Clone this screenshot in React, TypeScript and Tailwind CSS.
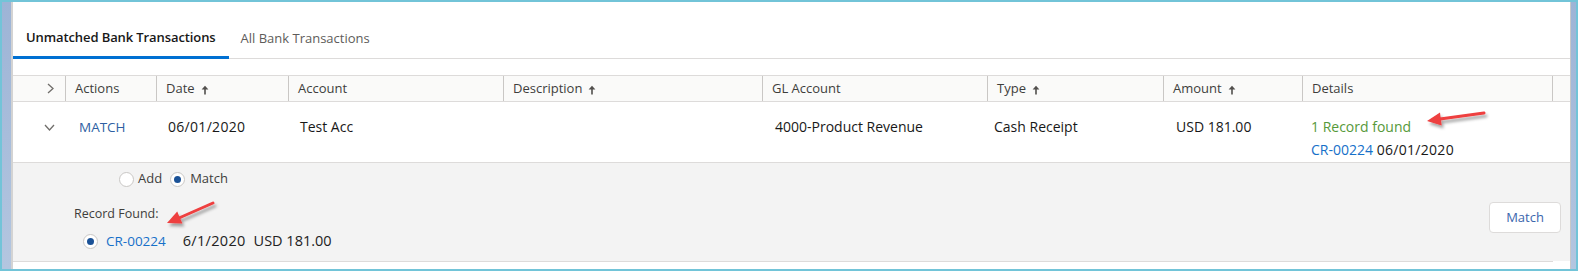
import * as React from "react";

const columns = [
	{ label: "", width: 52, sort: false },
	{ label: "Actions", width: 91, sort: false },
	{ label: "Date", width: 132, sort: true },
	{ label: "Account", width: 215, sort: false },
	{ label: "Description", width: 259, sort: true },
	{ label: "GL Account", width: 225, sort: false },
	{ label: "Type", width: 176, sort: true },
	{ label: "Amount", width: 139, sort: true },
	{ label: "Details", width: 250, sort: false },
];

function SortArrow() {
	return (
		<svg width="8" height="10" viewBox="0 0 8 10" className="ml-[6px] mt-[2px]">
			<path d="M4 9.5V2.5" stroke="#514f4d" strokeWidth="1.6" />
			<path d="M0.6 4.6L4 0.8L7.4 4.6Z" fill="#514f4d" />
		</svg>
	);
}

function Radio({ checked }: { checked?: boolean }) {
	return (
		<span className="flex h-[15px] w-[15px] items-center justify-center rounded-full border border-[#c9c7c5] bg-white">
			{checked && <span className="h-[7px] w-[7px] rounded-full bg-[#1b5297]" />}
		</span>
	);
}

function Annotations() {
	return (
		<svg
			className="pointer-events-none absolute inset-0"
			width="1578"
			height="271"
			viewBox="0 0 1578 271"
		>
			<defs>
				<filter id="shadow" x="-20%" y="-50%" width="140%" height="200%">
					<feDropShadow dx="2" dy="3" stdDeviation="1.6" floodColor="#000" floodOpacity="0.35" />
				</filter>
			</defs>
			<g filter="url(#shadow)">
				<path d="M1484 113L1440 119" stroke="#ee3f3f" strokeWidth="3" strokeLinecap="round" />
				<path d="M1427 121L1441.7 125.5L1440 112.6Z" fill="#ee3f3f" />
				<path d="M213 203L179 218" stroke="#ee3f3f" strokeWidth="3" strokeLinecap="round" />
				<path d="M167 223L182.4 223.4L177.2 211.4Z" fill="#ee3f3f" />
			</g>
		</svg>
	);
}

export default function App() {
	return (
		<div
			className="relative h-[271px] w-[1578px] overflow-hidden bg-[#72c4d8] p-[2px]"
			style={{ fontFamily: '"Open Sans", "Noto Sans", sans-serif' }}
		>
			<div className="flex h-full">
				<div className="w-[9px] bg-linear-to-b from-[#9db4d6] to-[#b3c6e0]" />
				<div className="w-[2px] bg-[#d3d3d3]" />
				<div className="flex flex-1 flex-col bg-white pt-[17px]">
					{/* tabs */}
					<div className="flex h-[40px] border-b border-[#dddbda] text-[13px]">
						<div className="-mb-px flex items-center border-b-[3px] border-[#0070d2] px-[13px] font-semibold tracking-[-0.1px] text-[#181818]">
							Unmatched Bank Transactions
						</div>
						<div className="flex items-center px-[12px] text-[#5e5c5a]">
							All Bank Transactions
						</div>
					</div>

					{/* header */}
					<div className="mt-[16px] flex h-[27px] border-y border-[#dddbda] bg-[#fafaf9] text-[13px] text-[#3e3e3c]">
						{columns.map((col, i) => (
							<div
								key={i}
								style={{ width: col.width }}
								className={
									i === 0
										? "flex items-center justify-end pr-[11px]"
										: "flex items-center border-l border-[#c9c7c5] pl-[9px]"
								}
							>
								{i === 0 ? (
									<svg width="7" height="11" viewBox="0 0 7 11">
										<path d="M1 1L6 5.5L1 10" fill="none" stroke="#706e6b" strokeWidth="1.3" />
									</svg>
								) : (
									<>
										{col.label}
										{col.sort && <SortArrow />}
									</>
								)}
							</div>
						))}
						<div className="flex-1 border-l border-[#c9c7c5]" />
					</div>

					{/* data row */}
					<div className="flex h-[61px] border-b border-[#dddbda] text-[14px] leading-[20px] text-[#181818]">
						<div className="flex w-[52px] justify-end pr-[10px] pt-[22px]">
							<svg width="11" height="7" viewBox="0 0 11 7">
								<path d="M1 1L5.5 6L10 1" fill="none" stroke="#706e6b" strokeWidth="1.3" />
							</svg>
						</div>
						<div className="w-[91px] pl-[14px] pt-[15px] text-[13.5px] text-[#2e5fa3]">MATCH</div>
						<div className="w-[132px] pl-[12px] pt-[15px] tracking-[0.3px]">06/01/2020</div>
						<div className="w-[215px] pl-[12px] pt-[15px]">Test Acc</div>
						<div className="w-[259px]" />
						<div className="w-[225px] pl-[13px] pt-[15px]">4000-Product Revenue</div>
						<div className="w-[176px] pl-[7px] pt-[15px]">Cash Receipt</div>
						<div className="w-[139px] pl-[13px] pt-[15px]">USD 181.00</div>
						<div className="flex w-[250px] flex-col gap-[3px] pl-[9px] pt-[15px]">
							<span className="text-[#56993a]">1 Record found</span>
							<span>
								<span className="text-[#1670c9]">CR-00224</span>{" "}
								<span className="tracking-[0.3px]">06/01/2020</span>
							</span>
						</div>
					</div>

					{/* expanded */}
					<div className="flex h-[98px] bg-[#f3f3f3]">
						<div className="flex flex-1 flex-col pl-[61px] pt-[8px]">
							<div className="ml-[45px] flex h-[16px] items-center text-[13px] text-[#3e3e3c]">
								<Radio />
								<span className="ml-[4px]">Add</span>
								<span className="ml-[8px]">
									<Radio checked />
								</span>
								<span className="ml-[5px]">Match</span>
							</div>
							<div className="mt-[19px] text-[12.5px] leading-[16px] text-[#3e3e3c]">
								Record Found:
							</div>
							<div className="mt-[9px] ml-[9px] flex items-center leading-[20px]">
								<Radio checked />
								<span className="ml-[8px] text-[13.5px] text-[#1670c9]">CR-00224</span>
								<span className="ml-[17px] text-[14.5px] tracking-[0.3px] text-[#222]">6/1/2020</span>
								<span className="ml-[8px] text-[14.5px] text-[#222]">USD 181.00</span>
							</div>
						</div>
						<div className="pr-[9px] pt-[39px]">
							<button className="h-[31px] w-[72px] rounded-[4px] border border-[#dddbda] bg-white text-[13px] text-[#3b66ad]">
								Match
							</button>
						</div>
					</div>
					<div className="h-px w-[1540px] bg-[#dddbda]" />
					<div className="flex-1" />
				</div>
				<div className="w-px bg-[#c8c8c8]" />
				<div className="w-[5px] bg-linear-to-b from-[#9db4d6] to-[#b3c6e0]" />
			</div>
			<Annotations />
		</div>
	);
}
